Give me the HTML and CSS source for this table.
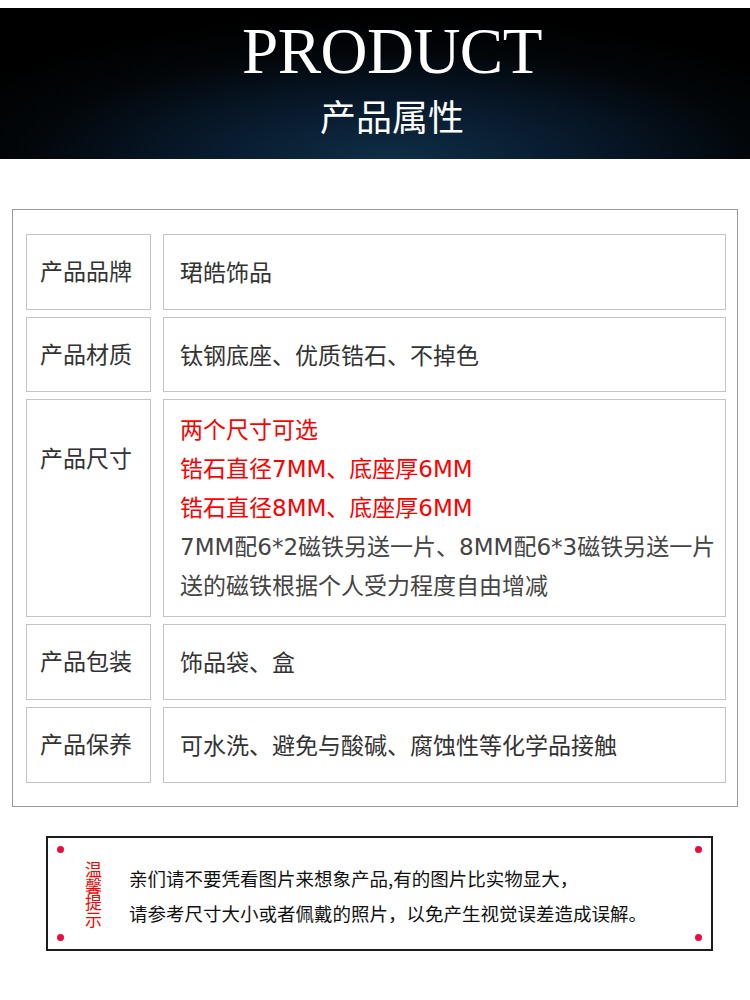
FILE: index.html
```html
<!DOCTYPE html>
<html>
<head>
	<meta charset="utf-8">
	<title>产品属性</title>
	<link rel="stylesheet" href="styles.css">
</head>
<body>
	<div class="banner">
		<h1>PRODUCT</h1>
		<h2>产品属性</h2>
	</div>

	<div class="attrs">
		<div class="row row-1">
			<div class="label">产品品牌</div>
			<div class="value">珺皓饰品</div>
		</div>
		<div class="row row-2">
			<div class="label">产品材质</div>
			<div class="value">钛钢底座、优质锆石、不掉色</div>
		</div>
		<div class="row row-3 tall">
			<div class="label">产品尺寸</div>
			<div class="value">
				<p class="red">两个尺寸可选</p>
				<p class="red">锆石直径7MM、底座厚6MM</p>
				<p class="red">锆石直径8MM、底座厚6MM</p>
				<p>7MM配6*2磁铁另送一片、8MM配6*3磁铁另送一片</p>
				<p>送的磁铁根据个人受力程度自由增减</p>
			</div>
		</div>
		<div class="row row-4">
			<div class="label">产品包装</div>
			<div class="value">饰品袋、盒</div>
		</div>
		<div class="row row-5">
			<div class="label">产品保养</div>
			<div class="value">可水洗、避免与酸碱、腐蚀性等化学品接触</div>
		</div>
	</div>

	<div class="notice">
		<span class="dot tl"></span>
		<span class="dot tr"></span>
		<span class="dot bl"></span>
		<span class="dot br"></span>
		<div class="tip">温馨提示</div>
		<div class="notice-text">
			<p>亲们请不要凭看图片来想象产品,有的图片比实物显大，</p>
			<p>请参考尺寸大小或者佩戴的照片，以免产生视觉误差造成误解。</p>
		</div>
	</div>
</body>
</html>
```

FILE: styles.css
```css
body {
	margin: 0;
	padding: 0;
	background-color: #fff;
	font-family: "Noto Sans CJK SC", "Noto Sans", sans-serif;
	width: 750px;
}
p {
	margin: 0;
}

/* header band */
.banner {
	margin-top: 8px;
	height: 151px;
	box-sizing: border-box;
	padding-top: 11px;
	padding-left: 34px;
	display: flex;
	flex-direction: column;
	align-items: center;
	background: radial-gradient(ellipse 65% 95% at 52% 100%, #0e2e47 0%, #08192b 40%, #020609 75%, #000 100%);
	color: #fff;
}
.banner h1 {
	margin: 0;
	font-family: "Liberation Serif", serif;
	font-weight: normal;
	font-size: 65px;
	line-height: 64px;
	letter-spacing: -0.5px;
}
.banner h2 {
	margin: 12px 0 0;
	font-weight: normal;
	font-size: 36px;
	line-height: 40px;
}

/* attribute table */
.attrs {
	margin: 50px 0 0 12px;
	width: 726px;
	box-sizing: border-box;
	border: 1px solid #9a9a9a;
	padding: 24px 11px 23px 13px;
	display: flex;
	flex-direction: column;
	gap: 7px;
}
.row {
	display: flex;
	gap: 12px;
	height: 76px;
}
.row-2 {
	height: 75px;
}
.row.tall {
	height: 218px;
}
.label,
.value {
	box-sizing: border-box;
	border: 1px solid #c4c4c4;
	font-size: 23px;
	color: #333;
	display: flex;
	flex-direction: column;
	justify-content: center;
}
.label {
	width: 125px;
	padding-left: 13px;
	padding-bottom: 4px;
}
.value {
	width: 563px;
	padding-left: 16px;
	padding-bottom: 2px;
	font-family: "DejaVu Sans", "Noto Sans CJK SC", sans-serif;
}
.tall .label {
	justify-content: flex-start;
	padding-top: 42px;
	line-height: 30px;
}
.tall .value {
	justify-content: flex-start;
	padding-top: 11px;
	line-height: 39px;
	color: #444;
}
.value .red {
	color: #f00;
}

/* warm tip box */
.notice {
	position: relative;
	margin: 29px 0 0 46px;
	width: 667px;
	height: 115px;
	box-sizing: border-box;
	border: 2px solid #1c1c1c;
	padding-left: 37px;
	display: flex;
	align-items: center;
	gap: 27px;
}
.dot {
	position: absolute;
	width: 7px;
	height: 7px;
	border-radius: 50%;
	background-color: #ec0b3e;
}
.dot.tl { left: 9px; top: 8px; }
.dot.tr { right: 9px; top: 8px; }
.dot.bl { left: 9px; bottom: 8px; }
.dot.br { right: 9px; bottom: 8px; }
.tip {
	writing-mode: vertical-rl;
	font-size: 17px;
	line-height: 17px;
	letter-spacing: -0.4px;
	color: #f00;
	margin-top: 2px;
}
.notice-text {
	font-size: 18.5px;
	line-height: 35px;
	color: #111;
	padding-top: 4px;
}
```
